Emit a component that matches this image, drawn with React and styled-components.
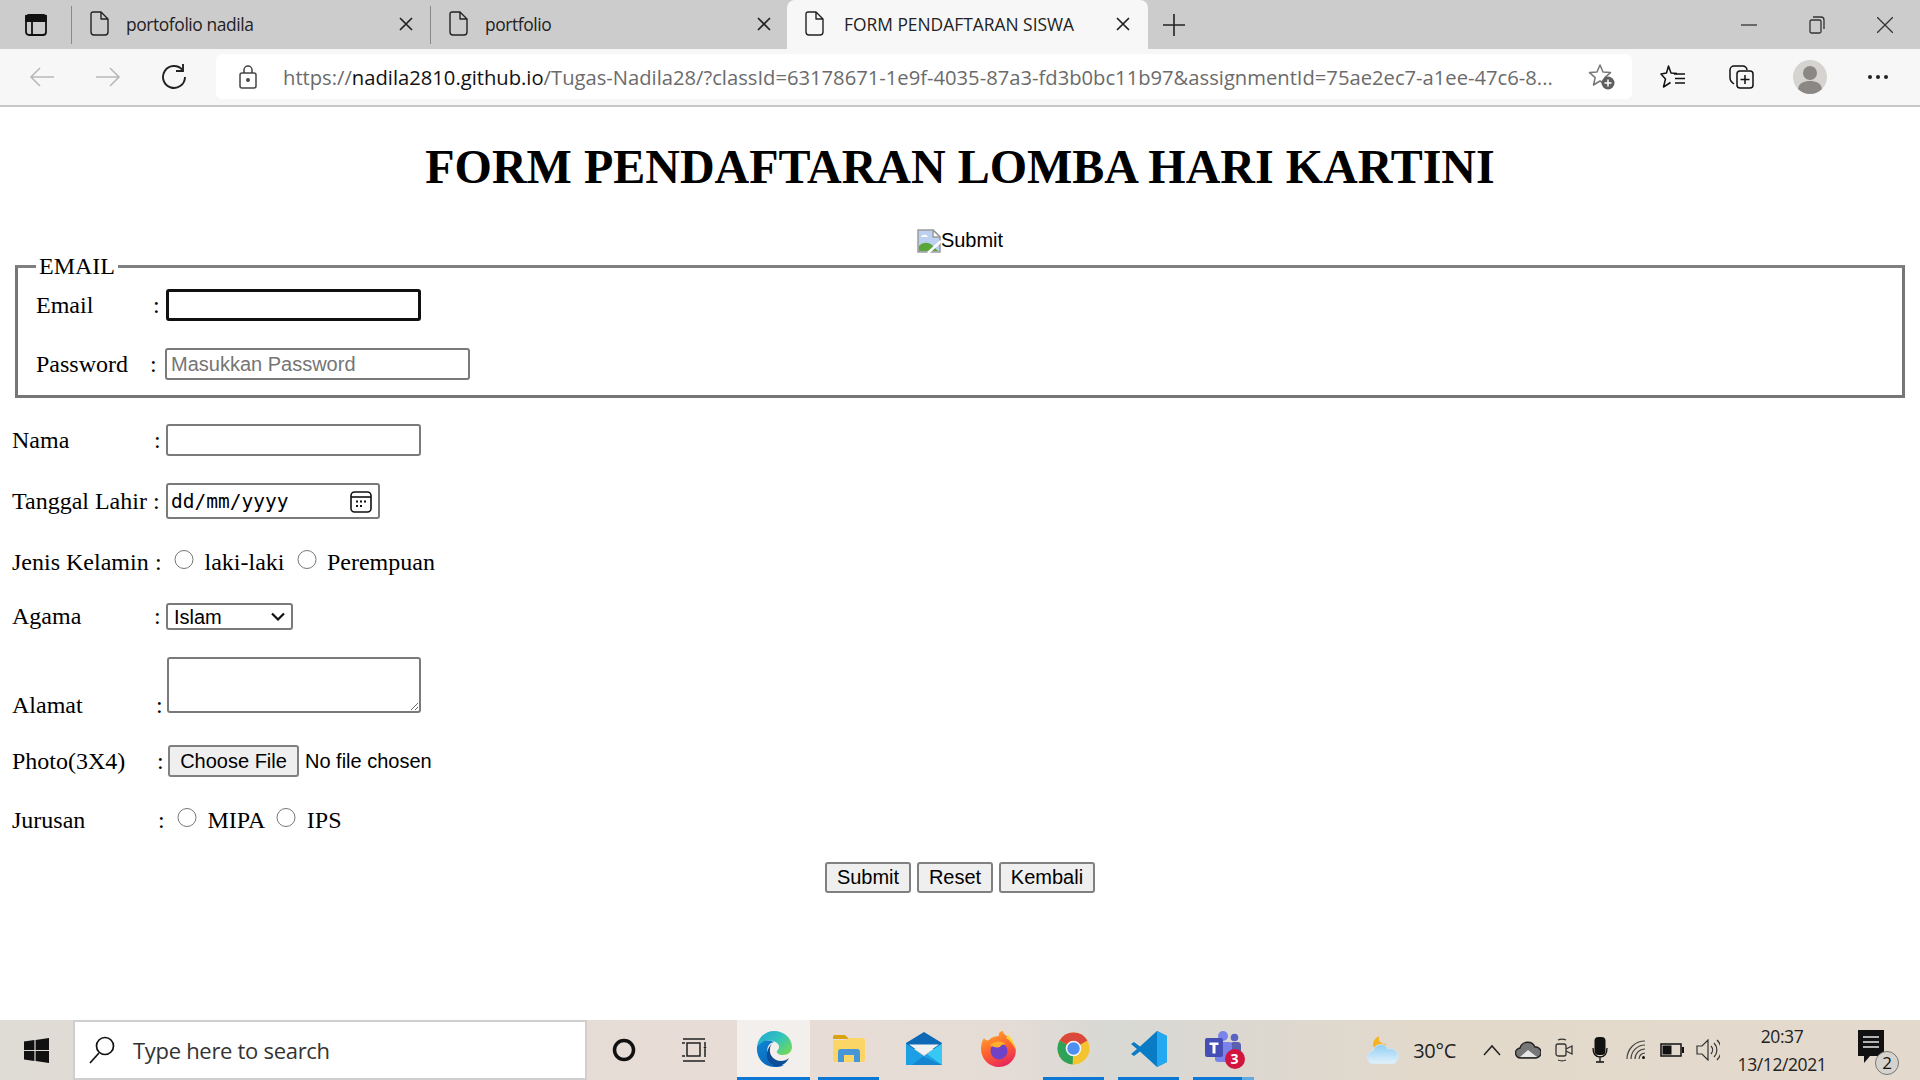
import styled, { createGlobalStyle } from "styled-components";

const GlobalStyle = createGlobalStyle`
  html, body {
    margin: 0;
    padding: 0;
    background: #fff;
    overflow: hidden;
  }
`;

const uiFont = `"Open Sans", "Noto Sans", sans-serif`;
const arial = `"Liberation Sans", Arial, sans-serif`;
const times = `"Liberation Serif", "Times New Roman", serif`;

const Screen = styled.div`
  width: 1920px;
  height: 1080px;
  display: flex;
  flex-direction: column;
  overflow: hidden;
`;

/* browser chrome */
const TabStrip = styled.div`
  height: 49px;
  flex: none;
  background: #cccccc;
  display: flex;
  align-items: center;
`;

const SideButton = styled.div`
  width: 71px;
  height: 100%;
  display: flex;
  align-items: center;
  justify-content: center;
`;

const Tab = styled.div`
  width: ${(p) => p.$w}px;
  height: ${(p) => (p.$active ? 49 : 38)}px;
  align-self: ${(p) => (p.$active ? "stretch" : "center")};
  display: flex;
  align-items: center;
  padding: 0 ${(p) => p.$pr}px 2px 18px;
  box-sizing: border-box;
  background: ${(p) => (p.$active ? "#f7f7f7" : "transparent")};
  border-left: ${(p) => (p.$active ? "none" : "1px solid #8a8a8a")};
  border-radius: ${(p) => (p.$active ? "8px 8px 0 0" : "0")};
  margin-left: ${(p) => (p.$active ? 8 : 0)}px;
`;

const TabTitle = styled.span`
  flex: 1;
  margin-left: ${(p) => (p.$active ? 20 : 17)}px;
  font: 17.4px ${uiFont};
  letter-spacing: ${(p) => (p.$active ? "0" : "-0.4px")};
  color: #222;
  white-space: nowrap;
  overflow: hidden;
`;

const TabClose = styled.svg`
  width: 14px;
  height: 14px;
  flex: none;
`;

const NewTab = styled.svg`
  width: 22px;
  height: 22px;
  margin-left: 15px;
`;

const WindowControls = styled.div`
  margin-left: auto;
  display: flex;
  align-items: center;
  gap: 52px;
  padding-right: 27px;
`;

const Toolbar = styled.div`
  height: 58px;
  flex: none;
  box-sizing: border-box;
  background: #f7f7f7;
  border-bottom: 2px solid #c8c8c8;
  display: flex;
  align-items: center;
  padding-bottom: 1px;
`;

const NavSlot = styled.div`
  width: ${(p) => p.$w}px;
  flex: none;
  display: flex;
  justify-content: center;
`;

const AddressBar = styled.div`
  width: 1416px;
  height: 45px;
  box-sizing: border-box;
  background: #fff;
  border-radius: 6px;
  display: flex;
  align-items: center;
  flex: none;
  padding-left: 23px;
`;

const Url = styled.div`
  margin-left: 26px;
  width: 1272px;
  flex: none;
  font: 20.2px ${uiFont};
  color: #6b6b6b;
  white-space: nowrap;
  overflow: hidden;
  b {
    font-weight: 400;
    color: #111;
  }
`;

const StarAdd = styled.svg`
  width: 28px;
  height: 28px;
  margin-left: 33px;
  flex: none;
`;

/* page */
const Page = styled.div`
  flex: 1;
  min-height: 0;
  padding: 0 12px;
  background: #fff;
  color: #000;
  font: 24px ${times};
`;

const Title = styled.h1`
  margin: 32px 0 0;
  text-align: center;
  font: bold 48px/55px ${times};
`;

const BrokenImageLine = styled.div`
  margin-top: 31px;
  height: 27px;
  padding-top: 4px;
  box-sizing: border-box;
  display: flex;
  justify-content: center;
  align-items: center;
  font: 20px ${arial};
`;

const LoginSet = styled.fieldset`
  margin: 0 3px;
  padding: 9px 18px 15px;
  border: 3px solid #767676;
  border-top-color: #808080;
  min-width: 0;
`;

const Legend = styled.legend`
  padding: 0 3px;
  font: 24px/28px ${times};
`;

const Row = styled.div`
  display: flex;
  align-items: ${(p) => p.$align || "center"};
  margin-top: ${(p) => p.$top || 0}px;
  height: ${(p) => (p.$h ? `${p.$h}px` : "auto")};
`;

const Label = styled.span`
  width: ${(p) => p.$w}px;
  flex: none;
  white-space: nowrap;
`;

const Colon = styled.span`
  width: ${(p) => p.$w || 11}px;
  flex: none;
`;

const LowLabel = styled(Label)`
  line-height: 27px;
  margin-bottom: -6px;
`;

const LowColon = styled(Colon)`
  line-height: 27px;
  margin-bottom: -6px;
`;

const TextInput = styled.input`
  box-sizing: border-box;
  width: ${(p) => p.$w}px;
  height: 32px;
  padding: 0 4px;
  font: 20px ${arial};
  background: #fff;
  border: ${(p) => (p.$focused ? "3px solid #101010" : "2px solid #7a7a7a")};
  border-radius: 3px;
  outline: none;
  &::placeholder {
    color: #757575;
  }
`;

const DateBox = styled.div`
  box-sizing: border-box;
  width: 214px;
  height: 36px;
  padding: 1px 6px 0 3px;
  display: flex;
  align-items: center;
  justify-content: space-between;
  border: 2px solid #7a7a7a;
  border-radius: 3px;
  font: 19.5px "DejaVu Sans Mono", "Liberation Mono", monospace;
  white-space: pre;
`;

const Radio = styled.input.attrs({ type: "radio" })`
  appearance: auto;
  width: 19.5px;
  height: 19.5px;
  margin: 0 ${(p) => p.$right || 11}px 5px 0;
  flex: none;
`;

const Choices = styled.span`
  margin-right: ${(p) => p.$right || 0}px;
`;

const Select = styled.select`
  box-sizing: border-box;
  appearance: none;
  width: 127px;
  height: 27px;
  padding: 0 0 0 6px;
  font: 20px ${arial};
  color: #000;
  border: 2px solid #7a7a7a;
  border-radius: 3px;
  background: #fff url("data:image/svg+xml,%3Csvg xmlns='http://www.w3.org/2000/svg' width='14' height='9'%3E%3Cpath d='M1 1.5l6 6 6-6' fill='none' stroke='%23111' stroke-width='2.2'/%3E%3C/svg%3E") no-repeat right 6px center;
`;

const TextArea = styled.textarea`
  box-sizing: border-box;
  width: 254px;
  height: 56px;
  display: block;
  border: 2px solid #7a7a7a;
  border-radius: 3px;
  outline: none;
  background: #fff;
`;

const PushButton = styled.button`
  box-sizing: border-box;
  height: ${(p) => p.$h || 31}px;
  width: ${(p) => p.$w}px;
  padding: 0;
  font: 20px ${arial};
  color: #000;
  background: #efefef;
  border: 2px solid #808080;
  border-radius: 3px;
  flex: none;
`;

const FileNote = styled.span`
  margin-left: 6px;
  font: 20px ${arial};
`;

const Actions = styled.div`
  margin-top: 27px;
  display: flex;
  justify-content: center;
  gap: 6px;
`;

/* taskbar */
const Taskbar = styled.div`
  height: 60px;
  flex: none;
  display: flex;
  align-items: stretch;
  background: linear-gradient(90deg, #dfdbd5 0%, #e8ddd6 40%, #e5dcd6 52%, #d8d8d4 58%, #e3d9cb 75%, #e3d9cd 100%);
`;

const StartSlot = styled.div`
  width: 73px;
  flex: none;
  display: flex;
  align-items: center;
  justify-content: center;
`;

const SearchBox = styled.div`
  width: 514px;
  flex: none;
  box-sizing: border-box;
  background: #fff;
  border: 2px solid #cfcfcf;
  display: flex;
  align-items: center;
  padding-left: 14px;
`;

const SearchText = styled.span`
  margin-left: 18px;
  font: 22px ${uiFont};
  letter-spacing: -0.3px;
  color: #333;
`;

const PlainSlot = styled.div`
  width: ${(p) => p.$w}px;
  margin-left: ${(p) => p.$ml || 0}px;
  margin-right: ${(p) => p.$mr || 0}px;
  flex: none;
  display: flex;
  align-items: center;
  justify-content: center;
`;

const AppSlot = styled.div`
  position: relative;
  width: ${(p) => p.$w || 61}px;
  margin-right: ${(p) => p.$gap ?? 14}px;
  flex: none;
  display: flex;
  align-items: center;
  justify-content: center;
  box-sizing: border-box;
  background: ${(p) => (p.$active ? "#f3efec" : "transparent")};
  border-bottom: ${(p) => (p.$open ? "3px solid #0a78d4" : "3px solid transparent")};
`;

const GroupMark = styled.span`
  position: absolute;
  right: 0;
  bottom: -3px;
  width: 12px;
  height: 3px;
  background: #62a9e2;
`;

const Tray = styled.div`
  margin-left: auto;
  display: flex;
  align-items: center;
`;

const TrayText = styled.span`
  font: 20px ${uiFont};
  letter-spacing: -0.3px;
  color: #222;
`;

const Clock = styled.div`
  width: 96px;
  text-align: center;
  font: 17.5px/28px ${uiFont};
  letter-spacing: -0.4px;
  color: #222;
  margin-left: 8px;
`;

const Notify = styled.div`
  position: relative;
  width: 36px;
  height: 40px;
  margin: 0 26px 0 28px;
`;

const NotifyBadge = styled.span`
  position: absolute;
  right: -5px;
  bottom: -5px;
  width: 24px;
  height: 24px;
  border-radius: 50%;
  background: #d6d2cd;
  border: 1px solid #777;
  box-sizing: border-box;
  font: 17px/22px ${uiFont};
  text-align: center;
  color: #111;
`;

const TeamsBadge = styled.span`
  position: absolute;
  right: -2px;
  bottom: -2px;
  width: 20px;
  height: 20px;
  border-radius: 50%;
  background: #d2153f;
  color: #fff;
  font: bold 14px/20px ${uiFont};
  text-align: center;
`;

const TeamsWrap = styled.div`
  position: relative;
  width: 38px;
  height: 36px;
`;

const Doc = () => (
  <svg width="19" height="25" viewBox="0 0 19 25" fill="none" stroke="#222" strokeWidth="1.4" style={{ flex: "none" }}>
    <path d="M3 1h8l7 7v13a3 3 0 0 1-3 3H4a3 3 0 0 1-3-3V3a2 2 0 0 1 2-2zM11 1v7h7" strokeLinejoin="round" />
  </svg>
);

const CloseGlyph = () => (
  <TabClose viewBox="0 0 14 14" stroke="#222" strokeWidth="1.7">
    <path d="M1 1l12 12M13 1L1 13" />
  </TabClose>
);

const Windows = () => (
  <svg width="25" height="25" viewBox="0 0 25 25" fill="#111">
    <path d="M0 3.6l10.4-1.5v9.8H0zM11.6 1.9L25 0v11.9H11.6zM0 13.1h10.4v9.8L0 21.4zM11.6 13.1H25V25l-13.4-1.9z" />
  </svg>
);

const Edge = () => (
  <svg width="36" height="36" viewBox="0 0 36 36">
    <defs>
      <linearGradient id="edgeTop" x1="0" y1="0" x2="1" y2="0.8">
        <stop offset="0" stopColor="#1fa6d8" />
        <stop offset="0.55" stopColor="#33c5b8" />
        <stop offset="1" stopColor="#72d958" />
      </linearGradient>
      <linearGradient id="edgeLow" x1="0" y1="0" x2="0.7" y2="1">
        <stop offset="0" stopColor="#0f86d6" />
        <stop offset="1" stopColor="#0a64b8" />
      </linearGradient>
    </defs>
    <path d="M1 16C2 6 10 0 18 0c11 0 18 8 18 16 0 5-4 8-9 8-4 0-7-2-6-4 2-2 3-4 1-7C18 8 6 8 1 16z" fill="url(#edgeTop)" />
    <path d="M1 16c3-6 11-8 17-5-6 1-8 7-6 13 2 6 10 11 16 10-3 2-7 2-10 2C8 36 0 27 1 16z" fill="url(#edgeLow)" />
    <path d="M14 18c-1 6 4 12 11 12 3 0 6-1 8-3-3 6-9 9-13 8.500-6-1.500-10-7.500-9-13.500.500-4 3-8.500 7-11-3 2-4 4-4 7z" fill="#0b4d96" />
  </svg>
);

const Explorer = () => (
  <svg width="32" height="27" viewBox="0 0 32 27">
    <path d="M0 2a2 2 0 0 1 2-2h10l4 4H0z" fill="#d9a30f" />
    <path d="M0 5h13l3-2h14a2 2 0 0 1 2 2v20a2 2 0 0 1-2 2H2a2 2 0 0 1-2-2z" fill="#fbd667" />
    <path d="M5 27V17a3 3 0 0 1 3-3h16a3 3 0 0 1 3 3v10h-6V20H11v7z" fill="#4796d8" />
  </svg>
);

const Mail = () => (
  <svg width="36" height="33" viewBox="0 0 36 33">
    <path d="M0 11L18 0l18 11v6H0z" fill="#0d69b6" />
    <path d="M3 12.500h30L18 23z" fill="#f1f1f1" />
    <path d="M0 11.500L18 24l18-12.500V33H0z" fill="#1c9fe4" />
    <path d="M36 11.500V33L21 22z" fill="#38c8f6" />
    <path d="M17 24.500L36 33H6z" fill="#1585cf" />
  </svg>
);

const Firefox = () => (
  <svg width="36" height="36" viewBox="0 0 36 36">
    <defs>
      <linearGradient id="foxBody" x1="0.2" y1="0" x2="0.6" y2="1">
        <stop offset="0" stopColor="#ffa82a" />
        <stop offset="0.55" stopColor="#ff5f2e" />
        <stop offset="1" stopColor="#e8265e" />
      </linearGradient>
    </defs>
    <path d="M3 7c1 2 3 3 5 2 3-3 6-4 10-4-1-2 1-5 4-5 0 3 3 4 6 7 6 5 8 12 6 18-3 7-9 11-16 11C8 36 0 28 0 18c0-4 1-8 3-11z" fill="url(#foxBody)" />
    <circle cx="18" cy="20" r="8.500" fill="#6e43c8" />
    <path d="M9 14c4-4 12-5 16 0-3-1-5 0-6 2-3 1-7 0-10-2z" fill="#ffb02b" />
    <path d="M27 4c4 3 7 9 7 14-2-5-5-9-9-11z" fill="#ffd43a" />
  </svg>
);

const Chrome = () => (
  <svg width="33" height="33" viewBox="-18 -18 36 36">
    <circle r="17.500" fill="#f4c430" />
    <path d="M0 0L-15.200-8.700A17.500 17.500 0 0 1 15.200-8.700z" fill="#d9483b" />
    <path d="M0 0L-15.200-8.700A17.500 17.500 0 0 0-1 17.500z" fill="#2fa25a" />
    <circle r="8.500" fill="#f5f5f5" />
    <circle r="6.800" fill="#4f8ff0" />
  </svg>
);

const VSCode = () => (
  <svg width="36" height="36" viewBox="0 0 36 36">
    <path d="M26 0L9 15.500 3 11 0 13l6 5-6 5 3 2 6-4.500L26 36l10-5V5zM26 10l-11 8 11 8z" fill="#0a7cc6" />
    <path d="M26 0l10 5v26l-10 5z" fill="#23a9f2" />
  </svg>
);

const Teams = () => (
  <TeamsWrap>
    <svg width="38" height="36" viewBox="0 0 38 36">
      <circle cx="29.500" cy="6.500" r="3.800" fill="#5a62c4" />
      <rect x="25" y="11" width="11" height="14" rx="3.500" fill="#5a5fb0" />
      <circle cx="18" cy="5" r="5" fill="#7b83eb" />
      <rect x="10" y="11" width="17" height="20" rx="3" fill="#7b83eb" />
      <rect x="0" y="7" width="18" height="19" rx="2" fill="#454eb4" />
      <path d="M4.500 11.500h9V14h-3v8.500h-3V14h-3z" fill="#fff" />
    </svg>
    <TeamsBadge>3</TeamsBadge>
  </TeamsWrap>
);

const BrokenImage = () => (
  <svg width="24" height="24" viewBox="0 0 24 24" style={{ flex: "none" }}>
    <path d="M1 1h15l7 7v15H1z" fill="#bcd0f2" stroke="#9a9a9a" strokeWidth="1.500" />
    <path d="M16 1v7h7z" fill="#fff" stroke="#9a9a9a" strokeWidth="1.500" strokeLinejoin="round" />
    <path d="M4 8c1-3 6-3 7 0z" fill="#fff" />
    <path d="M2 22v-5c4-4 9-4 13-1l6 6z" fill="#5aa63a" />
    <path d="M11 24L24 12" stroke="#fff" strokeWidth="2.500" />
  </svg>
);

export default function App() {
  return (
    <Screen>
      <GlobalStyle />
      <TabStrip>
        <SideButton>
          <svg width="22" height="22" viewBox="0 0 22 22" fill="none" stroke="#111" strokeWidth="1.800">
            <rect x="1" y="1" width="20" height="20" rx="3" />
            <path d="M1 2h20v5H1z" fill="#111" />
            <path d="M7 7v14" />
          </svg>
        </SideButton>
        <Tab $w={359} $pr={17}>
          <Doc />
          <TabTitle>portofolio nadila</TabTitle>
          <CloseGlyph />
        </Tab>
        <Tab $w={349} $pr={8}>
          <Doc />
          <TabTitle>portfolio</TabTitle>
          <CloseGlyph />
        </Tab>
        <Tab $active $w={361} $pr={18}>
          <Doc />
          <TabTitle $active>FORM PENDAFTARAN SISWA</TabTitle>
          <CloseGlyph />
        </Tab>
        <NewTab viewBox="0 0 22 22" stroke="#222" strokeWidth="1.600">
          <path d="M11 0v22M0 11h22" />
        </NewTab>
        <WindowControls>
          <svg width="16" height="16" viewBox="0 0 16 16" stroke="#333" strokeWidth="1.300">
            <path d="M0 8h16" />
          </svg>
          <svg width="16" height="18" viewBox="0 0 16 18" fill="none" stroke="#333" strokeWidth="1.300">
            <rect x="1" y="4" width="11" height="13" rx="1.500" />
            <path d="M4 1h8a3 3 0 0 1 3 3v9" />
          </svg>
          <svg width="16" height="16" viewBox="0 0 16 16" stroke="#333" strokeWidth="1.300">
            <path d="M0 0l16 16M16 0L0 16" />
          </svg>
        </WindowControls>
      </TabStrip>
      <Toolbar>
        <NavSlot $w={84}>
          <svg width="26" height="22" viewBox="0 0 26 22" fill="none" stroke="#b9b9b9" strokeWidth="1.600">
            <path d="M25 11H2M11 2l-9 9 9 9" />
          </svg>
        </NavSlot>
        <NavSlot $w={48}>
          <svg width="26" height="22" viewBox="0 0 26 22" fill="none" stroke="#b9b9b9" strokeWidth="1.600">
            <path d="M1 11h23M15 2l9 9-9 9" />
          </svg>
        </NavSlot>
        <NavSlot $w={84}>
          <svg width="26" height="26" viewBox="0 0 26 26" fill="none" stroke="#222" strokeWidth="1.900">
            <path d="M21.500 6A11 11 0 1 0 24 13" />
            <path d="M22 0v7h-7" />
          </svg>
        </NavSlot>
        <AddressBar>
          <svg width="18" height="24" viewBox="0 0 18 24" fill="none" stroke="#444" strokeWidth="1.500" style={{ flex: "none" }}>
            <rect x="1" y="8" width="16" height="15" rx="2" />
            <path d="M5 8V5a4 4 0 0 1 8 0v3" />
            <circle cx="9" cy="15" r="1.200" fill="#444" />
          </svg>
          <Url>
            https://<b>nadila2810.github.io</b>/Tugas-Nadila28/?classId=63178671-1e9f-4035-87a3-fd3b0bc11b97&amp;assignmentId=75ae2ec7-a1ee-47c6-8...
          </Url>
          <StarAdd viewBox="0 0 28 28">
            <path d="M12 2l3 7 7.500.6-5.700 5 1.700 7.400L12 18l-6.500 4 1.700-7.400-5.700-5L9 9z" fill="none" stroke="#777" strokeWidth="1.500" strokeLinejoin="round" />
            <circle cx="20" cy="20" r="6.500" fill="#5f5f5f" />
            <path d="M20 16.500v7M16.500 20h7" stroke="#fff" strokeWidth="1.500" />
          </StarAdd>
        </AddressBar>
        <NavSlot $w={82}>
          <svg width="26" height="24" viewBox="0 0 26 24" fill="none" stroke="#111" strokeWidth="1.500" strokeLinejoin="round">
            <path d="M17 8.500L11 8 8.500 1 6.500 8 1 9l4.500 5L3.500 22l7-4.500" />
            <path d="M14 9h11M15 13.500h10M15 18h10" />
          </svg>
        </NavSlot>
        <NavSlot $w={54}>
          <svg width="25" height="25" viewBox="0 0 25 25" fill="none" stroke="#111" strokeWidth="1.500">
            <path d="M5 20C2 18 1 16 1 14V6a4 4 0 0 1 4-4h9c2 0 4 2 4 4" />
            <rect x="8" y="7" width="16" height="17" rx="3" />
            <path d="M16 11v9M11.500 15.500h9" />
          </svg>
        </NavSlot>
        <NavSlot $w={84}>
          <svg width="34" height="34" viewBox="0 0 34 34">
            <circle cx="17" cy="17" r="17" fill="#d5d4d0" />
            <circle cx="17" cy="13" r="7" fill="#8a8784" />
            <path d="M5 29c1-6 6-8 12-8s11 2 12 8a17 17 0 0 1-24 0z" fill="#8a8784" />
          </svg>
        </NavSlot>
        <NavSlot $w={52}>
          <svg width="22" height="6" viewBox="0 0 22 6" fill="#222">
            <circle cx="3" cy="3" r="2" />
            <circle cx="11" cy="3" r="2" />
            <circle cx="19" cy="3" r="2" />
          </svg>
        </NavSlot>
      </Toolbar>

      <Page>
        <Title>FORM PENDAFTARAN LOMBA HARI KARTINI</Title>
        <BrokenImageLine>
          <BrokenImage />
          Submit
        </BrokenImageLine>
        <LoginSet>
          <Legend>EMAIL</Legend>
          <Row>
            <Label $w={117}>Email</Label>
            <Colon $w={13}>:</Colon>
            <TextInput $w={255} $focused />
          </Row>
          <Row $top={27}>
            <Label $w={114}>Password</Label>
            <Colon $w={15}>:</Colon>
            <TextInput $w={305} placeholder="Masukkan Password" />
          </Row>
        </LoginSet>
        <Row $top={26}>
          <Label $w={142}>Nama</Label>
          <Colon $w={12}>:</Colon>
          <TextInput $w={255} />
        </Row>
        <Row $top={27}>
          <Label $w={141}>Tanggal Lahir</Label>
          <Colon $w={13}>:</Colon>
          <DateBox>
            dd/mm/yyyy
            <svg width="22" height="22" viewBox="0 0 22 22" fill="none" stroke="#111" strokeWidth="1.600">
              <rect x="1" y="1" width="20" height="20" rx="3.500" />
              <path d="M1 6h20" />
              <path d="M6 10.500h2M10 10.500h2M14 10.500h2M6 15h2M10 15h2" strokeWidth="2" />
            </svg>
          </DateBox>
        </Row>
        <Row $top={28} $h={30}>
          <Label $w={143}>Jenis Kelamin</Label>
          <Colon $w={19}>:</Colon>
          <Radio $right={11} name="jk" />
          <Choices $right={13}>laki-laki</Choices>
          <Radio $right={10} name="jk" />
          <Choices>Perempuan</Choices>
        </Row>
        <Row $top={26}>
          <Label $w={142}>Agama</Label>
          <Colon $w={12}>:</Colon>
          <Select defaultValue="Islam">
            <option>Islam</option>
            <option>Kristen</option>
            <option>Hindu</option>
          </Select>
        </Row>
        <Row $top={27} $align="flex-end">
          <LowLabel $w={144}>Alamat</LowLabel>
          <LowColon>:</LowColon>
          <TextArea />
        </Row>
        <Row $top={32}>
          <Label $w={145}>Photo(3X4)</Label>
          <Colon>:</Colon>
          <PushButton $w={131} $h={32}>Choose File</PushButton>
          <FileNote>No file chosen</FileNote>
        </Row>
        <Row $top={28} $h={30}>
          <Label $w={146}>Jurusan</Label>
          <Colon $w={19}>:</Colon>
          <Radio $right={11} name="jrs" />
          <Choices $right={11}>MIPA</Choices>
          <Radio $right={11} name="jrs" />
          <Choices>IPS</Choices>
        </Row>
        <Actions>
          <PushButton $w={86}>Submit</PushButton>
          <PushButton $w={76}>Reset</PushButton>
          <PushButton $w={96}>Kembali</PushButton>
        </Actions>
      </Page>

      <Taskbar>
        <StartSlot>
          <Windows />
        </StartSlot>
        <SearchBox>
          <svg width="26" height="28" viewBox="0 0 26 28" fill="none" stroke="#111" strokeWidth="1.700">
            <circle cx="16" cy="10" r="8.500" />
            <path d="M10 17L1 27" />
          </svg>
          <SearchText>Type here to search</SearchText>
        </SearchBox>
        <PlainSlot $w={74}>
          <svg width="24" height="24" viewBox="0 0 24 24" fill="none" stroke="#111" strokeWidth="3.500">
            <circle cx="12" cy="12" r="9.500" />
          </svg>
        </PlainSlot>
        <PlainSlot $w={68} $mr={8}>
          <svg width="26" height="24" viewBox="0 0 26 24" fill="none" stroke="#222" strokeWidth="1.500">
            <path d="M1 1h22M1 23h22M5 5h13v13H5zM23 4v4M23 11v8M0 5h3M0 18h3" />
            <circle cx="23" cy="9.500" r="1.300" fill="#222" stroke="none" />
          </svg>
        </PlainSlot>
        <AppSlot $active $open $w={73} $gap={8}>
          <Edge />
        </AppSlot>
        <AppSlot $open>
          <Explorer />
        </AppSlot>
        <AppSlot>
          <Mail />
        </AppSlot>
        <AppSlot>
          <Firefox />
        </AppSlot>
        <AppSlot $open>
          <Chrome />
        </AppSlot>
        <AppSlot $open>
          <VSCode />
        </AppSlot>
        <AppSlot $open>
          <Teams />
          <GroupMark />
        </AppSlot>
        <Tray>
          <svg width="34" height="28" viewBox="0 0 34 28" style={{ marginRight: 12 }}>
            <defs>
              <linearGradient id="cloudFill" x1="0" y1="0" x2="0" y2="1">
                <stop offset="0" stopColor="#8fcdf3" />
                <stop offset="1" stopColor="#e4f3fb" />
              </linearGradient>
            </defs>
            <path d="M12 0c-1 5 2 8 7 8-1 4-5 6-9 6-6-2-5-11 2-14z" fill="#f6b321" />
            <path d="M7 28a6.500 6.500 0 0 1-1-13 8 8 0 0 1 15-2 7.500 7.500 0 0 1 5 15z" fill="url(#cloudFill)" stroke="#d5e6ef" />
          </svg>
          <TrayText>30°C</TrayText>
          <PlainSlot $w={36} $ml={18}>
            <svg width="18" height="12" viewBox="0 0 18 12" fill="none" stroke="#222" strokeWidth="1.500">
              <path d="M1 11l8-9 8 9" />
            </svg>
          </PlainSlot>
          <PlainSlot $w={36}>
            <svg width="26" height="18" viewBox="0 0 26 18">
              <path d="M6 17a5 5 0 0 1-1-10 8 8 0 0 1 15-1 5.500 5.500 0 0 1 1 11z" fill="#777" stroke="#222" strokeWidth="1.400" />
              <path d="M5 16l8-7 9 7z" fill="#e6e6e6" />
            </svg>
          </PlainSlot>
          <PlainSlot $w={36}>
            <svg width="18" height="24" viewBox="0 0 18 24" fill="none" stroke="#333" strokeWidth="1.300">
              <rect x="1" y="6" width="10" height="12" rx="2" />
              <path d="M11 11l6-3v8l-6-3M3 2c2-1 6-1 8 0M3 22c2 1 6 1 8 0" />
            </svg>
          </PlainSlot>
          <PlainSlot $w={36}>
            <svg width="16" height="26" viewBox="0 0 16 26">
              <rect x="2.500" y="0" width="11" height="18" rx="4" fill="#111" />
              <path d="M1 11c0 6 3 9 7 9s7-3 7-9M8 20v5M4 25h8" fill="none" stroke="#111" strokeWidth="1.300" />
            </svg>
          </PlainSlot>
          <PlainSlot $w={36}>
            <svg width="20" height="20" viewBox="0 0 20 20" fill="none" stroke="#444" strokeWidth="1.200">
              <path d="M1 19A18 18 0 0 1 19 1M5 19A14 14 0 0 1 19 5M9 19A10 10 0 0 1 19 9M13 19a6 6 0 0 1 6-6" />
              <circle cx="17.500" cy="17.500" r="1.500" fill="#111" stroke="none" />
            </svg>
          </PlainSlot>
          <PlainSlot $w={36}>
            <svg width="24" height="14" viewBox="0 0 24 14">
              <rect x="1" y="1" width="20" height="12" fill="none" stroke="#111" strokeWidth="1.500" />
              <rect x="2.500" y="2.500" width="9" height="9" fill="#111" />
              <rect x="22" y="4" width="2" height="6" fill="#111" />
            </svg>
          </PlainSlot>
          <PlainSlot $w={36}>
            <svg width="24" height="22" viewBox="0 0 24 22" fill="none" stroke="#333" strokeWidth="1.200">
              <path d="M1 7h5l6-6v20l-6-6H1zM15 7a6 6 0 0 1 0 8M18 4a10 10 0 0 1 0 14M21 1a14 14 0 0 1 0 20" />
            </svg>
          </PlainSlot>
          <Clock>
            20:37
            <br />
            13/12/2021
          </Clock>
          <Notify>
            <svg width="26" height="34" viewBox="0 0 26 34">
              <path d="M0 0h26v26H12l-6 7v-7H0z" fill="#111" />
              <path d="M5 7h16M5 12h16M5 17h16" stroke="#e8e8e8" strokeWidth="1.400" />
            </svg>
            <NotifyBadge>2</NotifyBadge>
          </Notify>
        </Tray>
      </Taskbar>
    </Screen>
  );
}
